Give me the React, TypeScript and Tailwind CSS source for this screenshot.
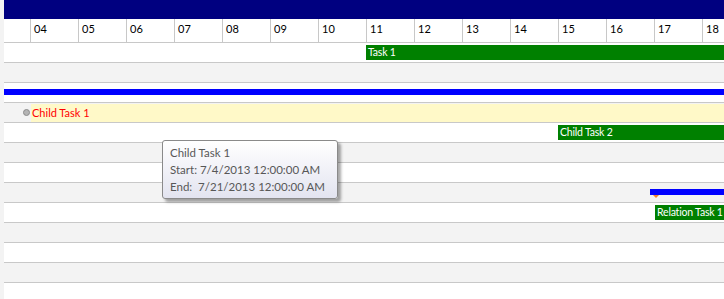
import React from "react";

const days = ["04", "05", "06", "07", "08", "09", "10", "11", "12", "13", "14", "15", "16", "17", "18"];

function Row({ gray, children }: { gray?: boolean; children?: React.ReactNode }) {
  return (
    <div
      className={`h-[20px] shrink-0 border-b border-[#c8c8c8] flex items-start overflow-hidden ${
        gray ? "bg-[#f3f3f3]" : "bg-white"
      }`}
    >
      {children}
    </div>
  );
}

function Bar({ ml, label }: { ml: string; label: string }) {
  return (
    <div className={`${ml} mt-[2px] h-[15px] flex-1 bg-[#008000] text-white text-[10.5px] tracking-[-0.2px] leading-[15px] pl-[2px] whitespace-nowrap`}>
      {label}
    </div>
  );
}

export default function App() {
  return (
    <div
      className="w-[724px] h-[299px] overflow-hidden flex bg-[#f3f3f3]"
      style={{ fontFamily: "Lato, 'Open Sans', sans-serif" }}
    >
      <div className="w-[4px] shrink-0" />
      <div className="flex-1 flex flex-col overflow-hidden relative">
        <div className="h-[19px] shrink-0 bg-[#000080]" />
        <div className="h-[24px] shrink-0 bg-white border-b border-[#c8c8c8] flex overflow-hidden">
          <div className="w-[26px] shrink-0" />
          {days.map((d) => (
            <div
              key={d}
              className="w-[48px] shrink-0 border-l border-[#c8c8c8] pl-[3px] pt-[3px] text-[11px] leading-[14px] text-black"
            >
              {d}
            </div>
          ))}
        </div>
        <Row>
          <Bar ml="ml-[362px]" label="Task 1" />
        </Row>
        <Row gray />
        <Row>
          <div className="mt-[6px] h-[6px] flex-1 bg-[#0000ff]" />
        </Row>
        <Row gray>
          <div className="ml-[19px] mt-[6px] w-[7px] h-[7px] rounded-full border border-[#8c8c8c] bg-[#b4b4b4] shrink-0" />
          <div className="ml-[1px] mt-[1px] h-[18px] flex-1 bg-[#fff9c8] text-[#ff0000] text-[11px] leading-[18px] pl-[1px] whitespace-nowrap">
            Child Task 1
          </div>
        </Row>
        <Row>
          <Bar ml="ml-[554px]" label="Child Task 2" />
        </Row>
        <Row gray />
        <Row />
        <Row gray>
          <div className="ml-[646px] mt-[6px] flex-1 relative">
            <div className="h-[6px] bg-[#0000ff]" />
            <div className="absolute left-[3px] top-[6px] w-0 h-0 border-l-[3px] border-r-[3px] border-t-[3px] border-l-transparent border-r-transparent border-t-[#f08030]" />
          </div>
        </Row>
        <Row>
          <Bar ml="ml-[651px]" label="Relation Task 1" />
        </Row>
        <Row gray />
        <Row />
        <Row gray />
        <Row />

        <div className="absolute left-[158px] top-[140px] w-[176px] h-[59px] border border-[#8a8a8a] rounded-[3px] bg-gradient-to-b from-white to-[#e3e4f0] shadow-[3px_3px_3px_rgba(0,0,0,0.35)] pl-[7px] pt-[3px] text-[11.5px] leading-[17px] text-[#575757] whitespace-pre">
          <div>Child Task 1</div>
          <div>Start: 7/4/2013 12:00:00 AM</div>
          <div>End:  7/21/2013 12:00:00 AM</div>
        </div>
      </div>
    </div>
  );
}
